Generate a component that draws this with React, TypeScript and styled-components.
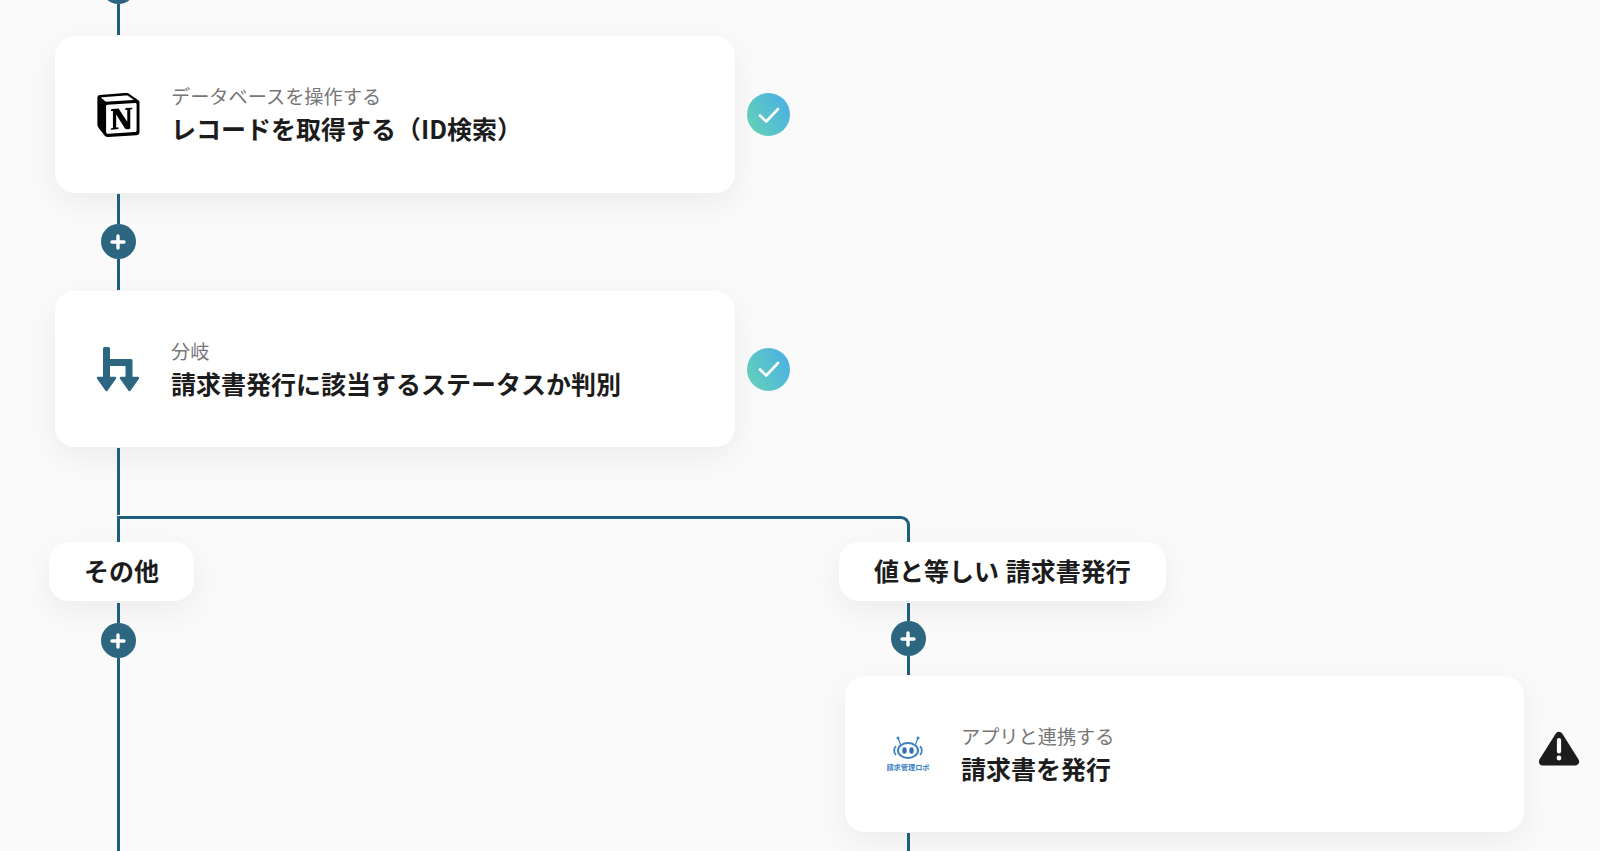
import styled, { createGlobalStyle } from "styled-components"

const GlobalStyle = createGlobalStyle`
  html, body {
    margin: 0;
    padding: 0;
    background: #fafafa;
  }
  body {
    font-family: "Noto Sans CJK JP", "Noto Sans", sans-serif;
    color: #1e1e1e;
  }
`

const LINE_COLOR = "#1d5f7d"

const Canvas = styled.div`
  width: 1600px;
  height: 851px;
  overflow: hidden;
  background: #fafafa;
`

const Flow = styled.div`
  display: flex;
  flex-direction: column;
  margin-top: -31px;
  padding-left: 55px;
`

const Rail = styled.div<{ $offset?: number }>`
  display: flex;
  flex-direction: column;
  align-items: center;
  width: 36px;
  margin-left: 45px;
  margin-top: ${(p) => p.$offset ?? 0}px;
  margin-bottom: 1px;
`

const Line = styled.div<{ $height: number }>`
  width: 3px;
  height: ${(p) => p.$height}px;
  background: ${LINE_COLOR};
`

const PlusButton = styled.div`
  width: 35px;
  height: 35px;
  border-radius: 50%;
  background: #2d6680;
  display: flex;
  align-items: center;
  justify-content: center;
  flex-shrink: 0;
`

const StepRow = styled.div`
  display: flex;
  align-items: center;
  gap: 12px;
`

const Card = styled.div<{ $width?: number; $height?: number }>`
  width: ${(p) => p.$width ?? 680}px;
  height: ${(p) => p.$height ?? 157}px;
  box-sizing: border-box;
  background: #fff;
  border-radius: 20px;
  box-shadow: 0 10px 32px rgba(0, 0, 0, 0.06);
  display: flex;
  align-items: center;
  padding-left: 35px;
  gap: 25px;
`

const IconSlot = styled.div`
  width: 56px;
  height: 56px;
  display: flex;
  align-items: center;
  justify-content: center;
  flex-shrink: 0;
`

const CardText = styled.div`
  display: flex;
  flex-direction: column;
  gap: 1px;
  padding-bottom: 2px;
`

const CardLabel = styled.div`
  font-size: 19.2px;
  line-height: 28px;
  color: #767676;
  font-weight: 400;
`

const CardTitle = styled.div`
  font-size: 25px;
  line-height: 34px;
  font-weight: 700;
  color: #1c1c1c;
`

const CheckBadge = styled.div`
  width: 43px;
  height: 43px;
  border-radius: 50%;
  background: linear-gradient(60deg, #66d4b4, #48ade8);
  display: flex;
  align-items: center;
  justify-content: center;
`

const WarningBadge = styled.div`
  display: flex;
  margin-left: 2px;
  margin-bottom: 13px;
`

const Elbow = styled.div`
  box-sizing: border-box;
  width: 793px;
  height: 26px;
  margin-left: 62px;
  border: 3px solid ${LINE_COLOR};
  border-bottom: 0;
  border-top-right-radius: 9px;
`

const Branches = styled.div`
  display: flex;
`

const BranchColumn = styled.div<{ $width: number }>`
  display: flex;
  flex-direction: column;
  width: ${(p) => p.$width}px;
  flex-shrink: 0;
`

const Pill = styled.div`
  align-self: flex-start;
  margin-left: -6px;
  margin-bottom: 2px;
  height: 59px;
  padding: 0 35px 3px;
  box-sizing: border-box;
  background: #fff;
  border-radius: 20px;
  box-shadow: 0 10px 32px rgba(0, 0, 0, 0.06);
  display: flex;
  align-items: center;
  font-size: 25px;
  font-weight: 700;
  color: #1c1c1c;
  white-space: pre;
  word-spacing: 1px;
`

function Plus() {
  return (
    <svg width="16" height="16" viewBox="0 0 16 16">
      <path d="M8 2v12M2 8h12" stroke="#fff" strokeWidth="3.4" strokeLinecap="round" />
    </svg>
  )
}

function Check() {
  return (
    <svg width="24" height="24" viewBox="0 0 24 24" fill="none">
      <path d="M3 12.5l6.2 6L21 6" stroke="#fff" strokeWidth="2.6" strokeLinecap="round" strokeLinejoin="round" />
    </svg>
  )
}

function NotionLogo() {
  return (
    <svg width="43" height="44" viewBox="0 0 96 100">
      <path
        d="M6.017 4.313l55.333 -4.087c6.797 -0.583 8.543 -0.19 12.817 2.917l17.663 12.443c2.913 2.14 3.883 2.723 3.883 5.053v68.243c0 4.277 -1.553 6.807 -6.99 7.193L24.467 99.967c-4.08 0.193 -6.023 -0.39 -8.16 -3.113L3.3 79.94c-2.333 -3.113 -3.3 -5.443 -3.3 -8.167V11.113c0 -3.497 1.553 -6.413 6.017 -6.8z"
        fill="#fff"
      />
      <path
        fillRule="evenodd"
        d="M61.35 0.227l-55.333 4.087C1.553 4.7 0 7.617 0 11.113v60.66c0 2.723 0.967 5.053 3.3 8.167l13.007 16.913c2.137 2.723 4.08 3.307 8.16 3.113l64.257 -3.89c5.433 -0.387 6.99 -2.917 6.99 -7.193V20.64c0 -2.21 -0.873 -2.847 -3.443 -4.733L74.167 3.143c-4.273 -3.107 -6.02 -3.5 -12.817 -2.917zM25.92 19.523c-5.247 0.353 -6.437 0.433 -9.417 -1.99L8.927 11.507c-0.77 -0.78 -0.383 -1.753 1.557 -1.947l53.193 -3.887c4.467 -0.39 6.793 1.167 8.54 2.527l9.123 6.61c0.39 0.197 1.36 1.36 0.193 1.36l-54.933 3.307 -0.68 0.047zM19.803 88.3V30.367c0 -2.53 0.777 -3.697 3.103 -3.893L86 22.78c2.14 -0.193 3.107 1.167 3.107 3.693v57.547c0 2.53 -0.39 4.67 -3.883 4.863l-60.377 3.5c-3.493 0.193 -5.043 -0.97 -5.043 -3.983zm59.6 -54.827c0.387 1.75 0 3.5 -1.75 3.7l-2.91 0.577v42.773c-2.527 1.36 -4.853 2.137 -6.797 2.137 -3.107 0 -3.883 -0.973 -6.21 -3.887l-19.03 -29.94v28.967l6.02 1.363s0 3.5 -4.857 3.5l-13.39 0.777c-0.39 -0.78 0 -2.723 1.357 -3.11l3.497 -0.97v-38.3L30.48 40.667c-0.39 -1.75 0.58 -4.277 3.3 -4.473l14.367 -0.967 19.8 30.327v-26.83l-5.047 -0.58c-0.39 -2.143 1.163 -3.7 3.103 -3.89l13.4 -0.78z"
        fill="#000"
      />
    </svg>
  )
}

function BranchIcon() {
  return (
    <svg width="44" height="46" viewBox="0 -1 44 46" fill="#2d6680">
      <path d="M7 1.5a1.5 1.5 0 0 1 1.5 -1.5h4a1.5 1.5 0 0 1 1.5 1.5V12h21a1.5 1.5 0 0 1 1.5 1.5V32h-7V19H14v13H7z" />
      <g stroke="#2d6680" strokeWidth="2.4" strokeLinejoin="round">
        <path d="M2 31h17l-8.5 12z" />
        <path d="M25 31h17l-8.5 12z" />
      </g>
    </svg>
  )
}

function RobotLogo() {
  return (
    <svg width="46" height="40" viewBox="0 0 46 40">
      <g fill="none" stroke="#3a80c4">
        <path d="M13.5 5l2 5.5M32.5 5l-2 5.5" strokeWidth="1.2" />
        <path d="M11 12a6.5 6.5 0 0 0 0 9M35 12a6.5 6.5 0 0 1 0 9" strokeWidth="1.8" />
      </g>
      <circle cx="13" cy="4" r="1.5" fill="#3a80c4" />
      <circle cx="33" cy="4" r="1.5" fill="#3a80c4" />
      <ellipse cx="23" cy="16.5" rx="10" ry="7.5" fill="#fff" stroke="#3a80c4" strokeWidth="2" />
      <ellipse cx="19.5" cy="16.5" rx="2.2" ry="3.2" fill="#2f6fb5" />
      <ellipse cx="26.5" cy="16.5" rx="2.2" ry="3.2" fill="#2f6fb5" />
      <text x="23" y="36" textAnchor="middle" fontSize="7.2" fontWeight="700" fill="#3a80c4" fontFamily="Noto Sans CJK JP, sans-serif">
        請求管理ロボ
      </text>
    </svg>
  )
}

function WarningIcon() {
  return (
    <svg width="42" height="36" viewBox="0 0 42 36">
      <path d="M21 6L37 31.5H5z" fill="#1c1c1c" stroke="#1c1c1c" strokeWidth="8" strokeLinejoin="round" />
      <path d="M21 10v11.5" stroke="#fff" strokeWidth="4.2" strokeLinecap="round" />
      <circle cx="21" cy="28" r="2.4" fill="#fff" />
    </svg>
  )
}

type StepProps = {
  icon: React.ReactNode
  label: string
  title: string
  badge: React.ReactNode
  width?: number
  height?: number
}

function Step({ icon, label, title, badge, width, height }: StepProps) {
  return (
    <StepRow>
      <Card $width={width} $height={height}>
        <IconSlot>{icon}</IconSlot>
        <CardText>
          <CardLabel>{label}</CardLabel>
          <CardTitle>{title}</CardTitle>
        </CardText>
      </Card>
      {badge}
    </StepRow>
  )
}

function Done() {
  return (
    <CheckBadge>
      <Check />
    </CheckBadge>
  )
}

export default function App() {
  return (
    <Canvas>
      <GlobalStyle />
      <Flow>
        <Rail>
          <PlusButton>
            <Plus />
          </PlusButton>
          <Line $height={31} />
        </Rail>
        <Step icon={<NotionLogo />} label="データベースを操作する" title="レコードを取得する（ID検索）" badge={<Done />} />
        <Rail $offset={1}>
          <Line $height={30} />
          <PlusButton>
            <Plus />
          </PlusButton>
          <Line $height={31} />
        </Rail>
        <Step icon={<BranchIcon />} label="分岐" title="請求書発行に該当するステータスか判別" height={156} badge={<Done />} />
        <Rail $offset={1}>
          <Line $height={67} />
        </Rail>
        <Elbow />
        <Branches>
          <BranchColumn $width={790}>
            <Pill>その他</Pill>
            <Rail>
              <Line $height={20} />
              <PlusButton>
                <Plus />
              </PlusButton>
              <Line $height={200} />
            </Rail>
          </BranchColumn>
          <BranchColumn $width={740}>
            <Pill>値と等しい 請求書発行</Pill>
            <Rail>
              <Line $height={18} />
              <PlusButton>
                <Plus />
              </PlusButton>
              <Line $height={19} />
            </Rail>
            <Step
              icon={<RobotLogo />}
              label="アプリと連携する"
              title="請求書を発行"
              width={679}
              height={156}
              badge={
                <WarningBadge>
                  <WarningIcon />
                </WarningBadge>
              }
            />
            <Rail $offset={1}>
              <Line $height={30} />
            </Rail>
          </BranchColumn>
        </Branches>
      </Flow>
    </Canvas>
  )
}
